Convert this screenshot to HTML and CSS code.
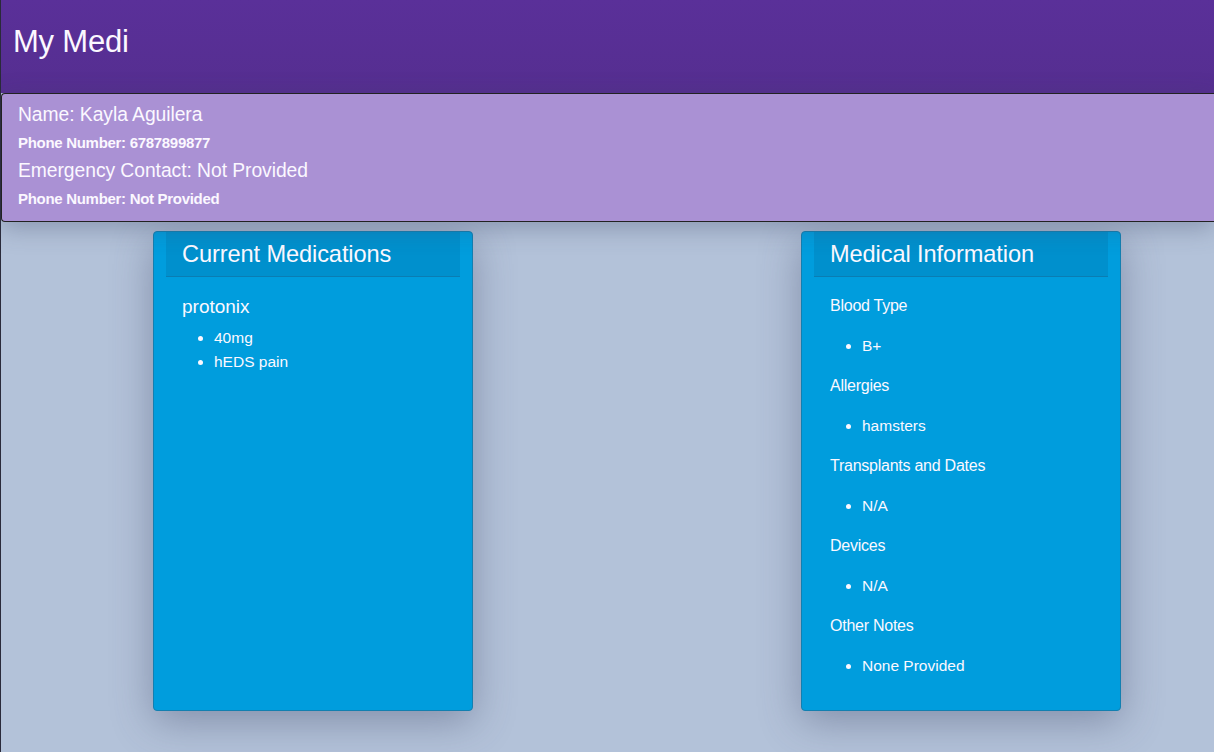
FILE: index.html
```html
<!DOCTYPE html>
<html>
<head>
<meta charset="utf-8">
<title>My Medi</title>
<link rel="stylesheet" href="styles.css">
</head>
<body>
<div class="page">
  <header class="topbar">
    <h1 class="brand">My Medi</h1>
  </header>
  <section class="info">
    <p class="info-main">Name: Kayla Aguilera</p>
    <p class="info-sub">Phone Number: 6787899877</p>
    <p class="info-main">Emergency Contact: Not Provided</p>
    <p class="info-sub">Phone Number: Not Provided</p>
  </section>
  <main class="cards">
    <section class="card">
      <div class="card-head"><h2 class="card-title">Current Medications</h2></div>
      <div class="card-body">
        <h3 class="med-name">protonix</h3>
        <ul class="med-list">
          <li>40mg</li>
          <li>hEDS pain</li>
        </ul>
      </div>
    </section>
    <section class="card">
      <div class="card-head"><h2 class="card-title">Medical Information</h2></div>
      <div class="card-body">
        <p class="label">Blood Type</p>
        <ul class="info-list"><li>B+</li></ul>
        <p class="label">Allergies</p>
        <ul class="info-list"><li>hamsters</li></ul>
        <p class="label">Transplants and Dates</p>
        <ul class="info-list"><li>N/A</li></ul>
        <p class="label">Devices</p>
        <ul class="info-list"><li>N/A</li></ul>
        <p class="label">Other Notes</p>
        <ul class="info-list"><li>None Provided</li></ul>
      </div>
    </section>
  </main>
</div>
</body>
</html>
```
FILE: styles.css
```css
html, body {
  margin: 0;
  padding: 0;
  height: 100%;
}
body {
  background: #b3c2d9;
  font-family: "Liberation Sans", Arial, sans-serif;
  color: #fbf8ff;
  overflow: hidden;
}
.page {
  border-left: 1px solid #2a2a3a;
  min-height: 752px;
  box-sizing: border-box;
}
.topbar {
  height: 93px;
  background: linear-gradient(#5a3099, #552e90);
  display: flex;
  align-items: center;
  padding-left: 12px;
}
.brand {
  margin: 0;
  font-size: 31px;
  font-weight: normal;
  letter-spacing: -0.2px;
  position: relative;
  top: -5px;
}
.info {
  background: #aa91d4;
  border: 1px solid #222;
  border-right: none;
  border-radius: 4px 0 0 4px;
  height: 129px;
  box-sizing: border-box;
  padding: 7px 0 0 16px;
  box-shadow: 0 6px 24px rgba(60, 70, 100, 0.35);
  position: relative;
}
.info p { margin: 0; }
.info-main {
  font-size: 19.3px;
  line-height: 28px;
  letter-spacing: -0.05px;
}
.info-sub {
  font-size: 15px;
  font-weight: bold;
  line-height: 28px;
  letter-spacing: -0.3px;
}
.cards {
  display: flex;
  gap: 328px;
  padding: 9px 0 0 152px;
}
.card {
  width: 320px;
  height: 480px;
  box-sizing: border-box;
  background: #009ddd;
  border: 1px solid #137fb0;
  border-radius: 4px;
  box-shadow: 0 10px 40px rgba(70, 80, 110, 0.45);
}
.card-head {
  margin: 0 12px;
  height: 45px;
  background: #0090cd;
  border-bottom: 1px solid #0a7db3;
  box-sizing: border-box;
  padding-left: 16px;
  display: flex;
  align-items: center;
}
.card-title {
  margin: 0;
  font-size: 23.6px;
  font-weight: normal;
  letter-spacing: -0.1px;
}
.card-body {
  padding: 18px 28px;
}
.med-name {
  margin: 0;
  font-size: 19px;
  font-weight: normal;
  line-height: 24px;
}
.med-list {
  margin: 7px 0 0;
  padding-left: 32px;
  font-size: 15.5px;
  line-height: 24px;
}
.label {
  margin: 0;
  font-size: 16px;
  line-height: 24px;
  letter-spacing: -0.25px;
}
.card-body .label:first-child {
  margin-top: -1px;
}
.info-list {
  margin: 16px 0;
  padding-left: 32px;
  font-size: 15.5px;
  line-height: 24px;
}
```
